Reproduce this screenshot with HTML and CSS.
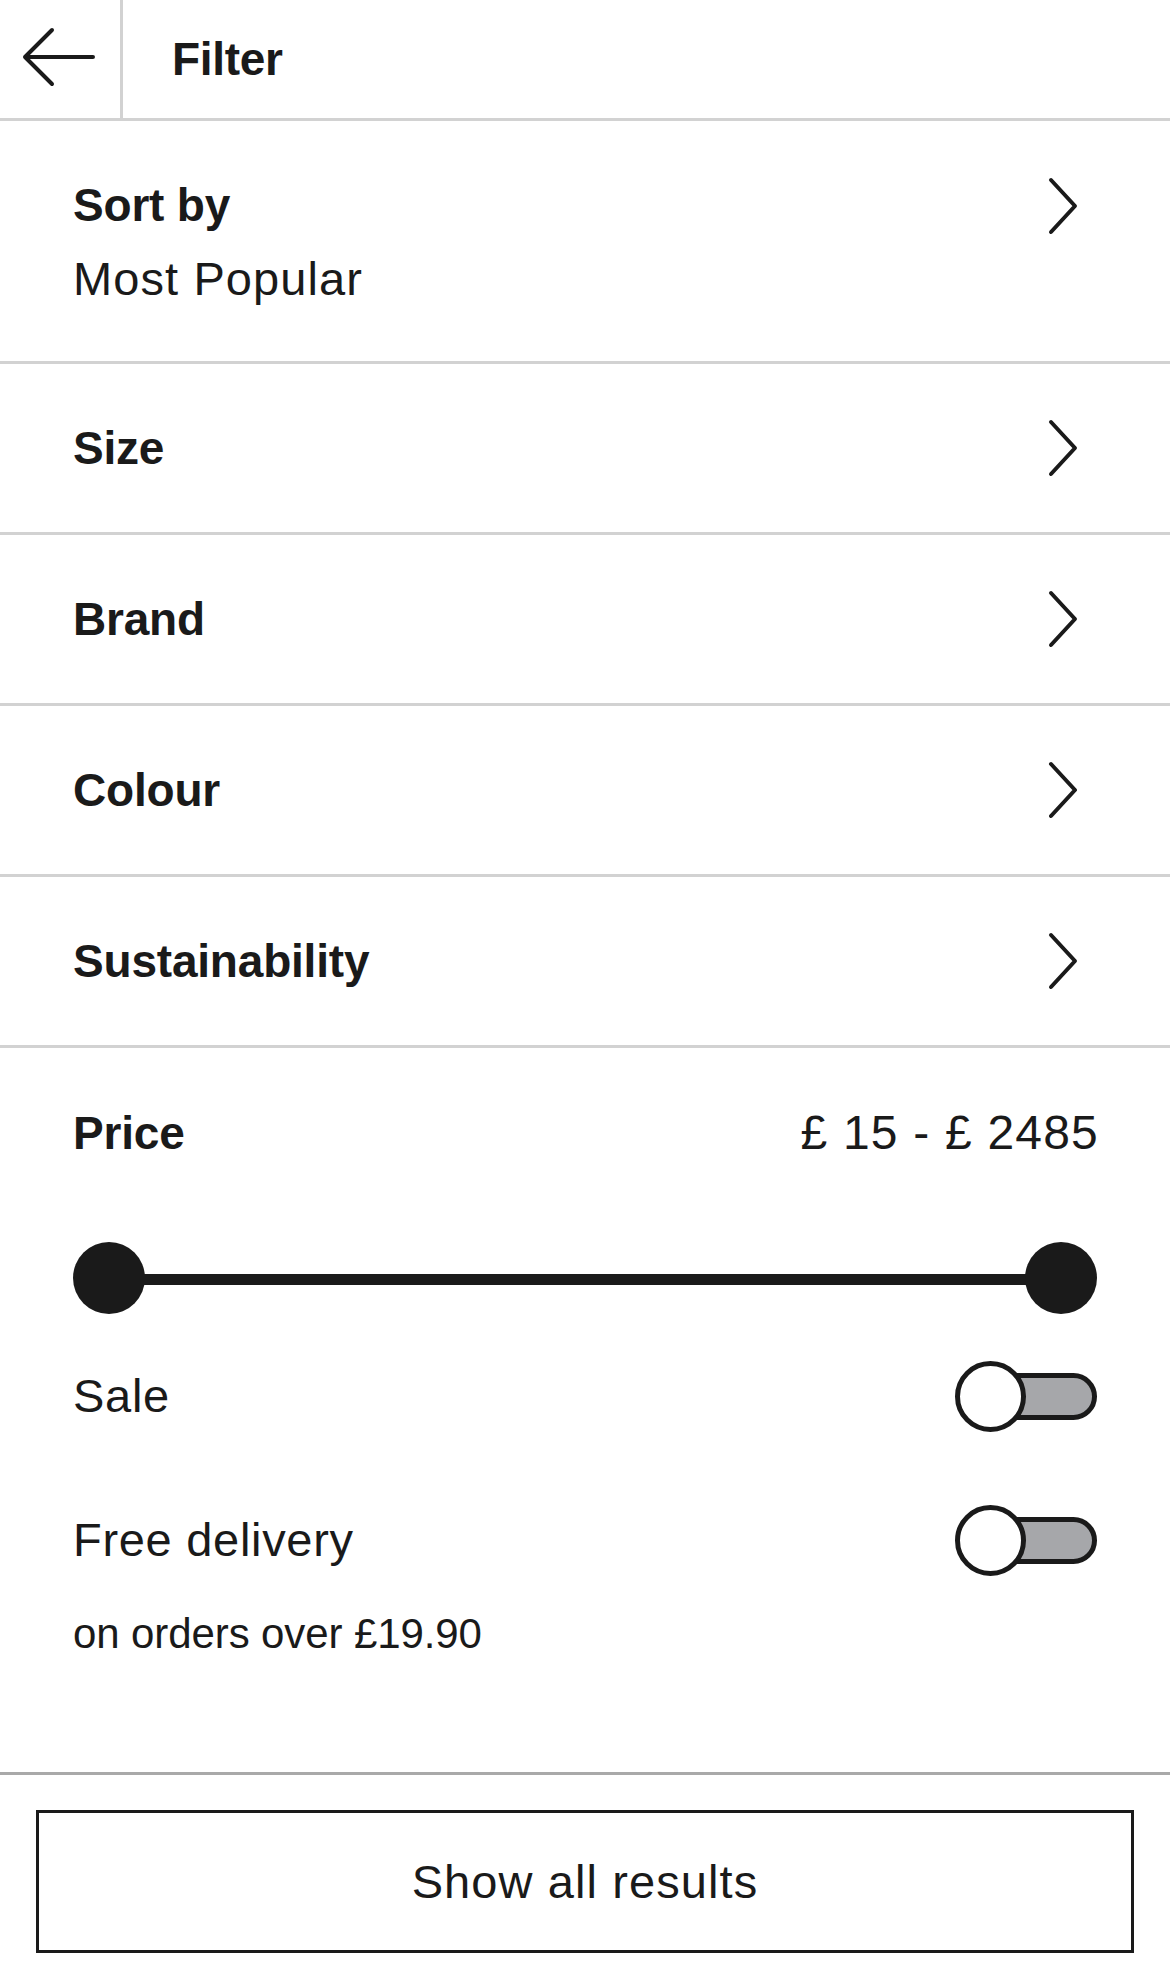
FILE: index.html
```html
<!DOCTYPE html>
<html lang="en">
<head>
<meta charset="utf-8">
<title>Filter</title>
<link rel="stylesheet" href="styles.css">
</head>
<body>
<div class="page">
  <header class="topbar">
    <button class="back" aria-label="Back">
      <svg width="120" height="118" viewBox="0 0 120 118">
        <path d="M93 57 H25 M52 30 L25 57 L52 84" fill="none" stroke="#1a1a1a" stroke-width="4" stroke-linecap="round" stroke-linejoin="round"/>
      </svg>
    </button>
    <h1 class="title">Filter</h1>
  </header>

  <div class="row row-sort">
    <div class="row-text">
      <div class="label">Sort by</div>
      <div class="value">Most Popular</div>
    </div>
    <svg class="chev" width="34" height="60" viewBox="0 0 34 60">
      <path d="M5 4 L29 30 L5 56" fill="none" stroke="#1a1a1a" stroke-width="4" stroke-linecap="round" stroke-linejoin="round"/>
    </svg>
  </div>

  <div class="row">
    <div class="label">Size</div>
    <svg class="chev" width="34" height="60" viewBox="0 0 34 60"><path d="M5 4 L29 30 L5 56" fill="none" stroke="#1a1a1a" stroke-width="4" stroke-linecap="round" stroke-linejoin="round"/></svg>
  </div>
  <div class="row">
    <div class="label">Brand</div>
    <svg class="chev" width="34" height="60" viewBox="0 0 34 60"><path d="M5 4 L29 30 L5 56" fill="none" stroke="#1a1a1a" stroke-width="4" stroke-linecap="round" stroke-linejoin="round"/></svg>
  </div>
  <div class="row">
    <div class="label">Colour</div>
    <svg class="chev" width="34" height="60" viewBox="0 0 34 60"><path d="M5 4 L29 30 L5 56" fill="none" stroke="#1a1a1a" stroke-width="4" stroke-linecap="round" stroke-linejoin="round"/></svg>
  </div>
  <div class="row">
    <div class="label">Sustainability</div>
    <svg class="chev" width="34" height="60" viewBox="0 0 34 60"><path d="M5 4 L29 30 L5 56" fill="none" stroke="#1a1a1a" stroke-width="4" stroke-linecap="round" stroke-linejoin="round"/></svg>
  </div>

  <section class="price">
    <div class="price-head">
      <div class="label">Price</div>
      <div class="price-value">£ 15 - £ 2485</div>
    </div>
    <div class="slider">
      <span class="thumb"></span>
      <span class="track"></span>
      <span class="thumb"></span>
    </div>
    <div class="switch-row switch-sale">
      <span class="switch-label">Sale</span>
      <span class="toggle"><span class="knob"></span><span class="rail"></span></span>
    </div>
    <div class="switch-row switch-free">
      <span class="switch-label">Free delivery</span>
      <span class="toggle"><span class="knob"></span><span class="rail"></span></span>
    </div>
    <p class="note">on orders over £19.90</p>
  </section>

  <footer class="footer">
    <button class="show-btn">Show all results</button>
  </footer>
</div>
</body>
</html>
```

FILE: styles.css
```css
* { box-sizing: border-box; }

html, body {
  margin: 0;
  padding: 0;
  background: #ffffff;
}

body {
  font-family: "Liberation Sans", Arial, Helvetica, sans-serif;
  color: #1a1a1a;
  width: 1170px;
}

.page {
  display: flex;
  flex-direction: column;
}

/* Header */
.topbar {
  display: flex;
  align-items: stretch;
  height: 121px;
  border-bottom: 3px solid #d2d2d2;
}

.back {
  width: 123px;
  padding: 0;
  margin: 0;
  border: 0;
  border-right: 3px solid #d2d2d2;
  background: transparent;
  display: flex;
  align-items: center;
  justify-content: flex-start;
}

.back svg { display: block; }

.title {
  margin: 0;
  padding-left: 49px;
  font-size: 46px;
  font-weight: 700;
  line-height: 118px;
  letter-spacing: -0.3px;
}

/* List rows */
.row {
  display: flex;
  align-items: center;
  justify-content: space-between;
  height: 171px;
  padding: 0 90px 0 73px;
  border-bottom: 3px solid #d2d2d2;
}

.row-sort {
  height: 243px;
  align-items: flex-start;
  padding-top: 56px;
}

.row-sort .chev { margin-top: -1px; }

.row-text {
  display: flex;
  flex-direction: column;
  gap: 18px;
}

.label {
  font-size: 46px;
  font-weight: 700;
  line-height: 56px;
  letter-spacing: -0.2px;
}

.value {
  font-size: 47px;
  font-weight: 400;
  line-height: 56px;
  letter-spacing: 1.1px;
}

.chev { display: block; flex-shrink: 0; }

/* Price section */
.price {
  padding: 57px 73px 114px 73px;
  border-bottom: 3px solid #a9a9a9;
}

.price-head {
  display: flex;
  justify-content: space-between;
  align-items: center;
}

.price-value {
  font-size: 48px;
  line-height: 56px;
  letter-spacing: 1.2px;
  margin-right: -2px;
}

.slider {
  display: flex;
  align-items: center;
  height: 72px;
  margin-top: 82px;
}

.thumb {
  width: 72px;
  height: 72px;
  border-radius: 50%;
  background: #1a1a1a;
  flex-shrink: 0;
  margin-top: -3px;
}

.track {
  flex: 1;
  height: 11px;
  background: #1a1a1a;
  margin: 0 -2px;
}

.switch-row {
  display: flex;
  align-items: center;
  justify-content: space-between;
  height: 72px;
}

.switch-sale { margin-top: 45px; }
.switch-free { margin-top: 72px; }

.switch-label {
  font-size: 47px;
  line-height: 56px;
  letter-spacing: 0.7px;
}

.toggle {
  display: flex;
  align-items: center;
}

.knob {
  width: 71px;
  height: 71px;
  border-radius: 50%;
  border: 5px solid #1a1a1a;
  background: #ffffff;
  z-index: 1;
  flex-shrink: 0;
}

.rail {
  width: 107px;
  height: 47px;
  margin-left: -36px;
  border: 5px solid #1a1a1a;
  border-radius: 0 24px 24px 0;
  background: #a6a7aa;
}

.note {
  margin: 34px 0 0 0;
  font-size: 42px;
  line-height: 48px;
  letter-spacing: -0.1px;
}

/* Footer */
.footer {
  padding: 35px 36px 26px 36px;
}

.show-btn {
  display: block;
  width: 100%;
  height: 143px;
  margin: 0;
  border: 3px solid #1a1a1a;
  background: #ffffff;
  color: #1a1a1a;
  font-family: "Liberation Sans", Arial, Helvetica, sans-serif;
  font-size: 47px;
  letter-spacing: 1.1px;
  padding: 0;
}
```
